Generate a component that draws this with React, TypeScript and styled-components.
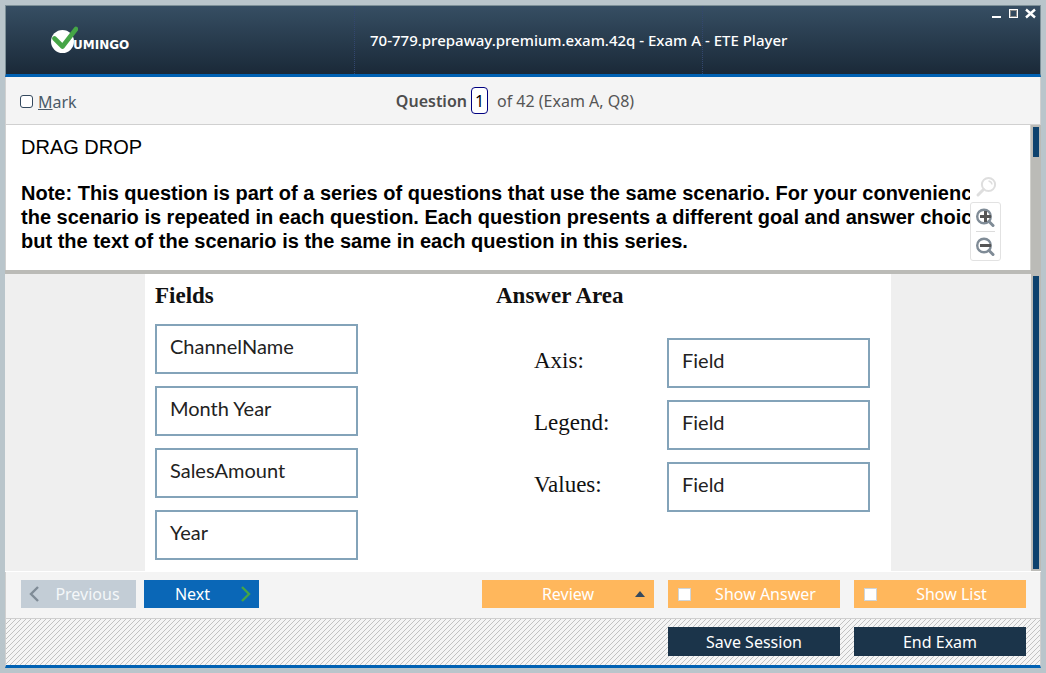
import React, { useState } from "react";
import styled, { createGlobalStyle } from "styled-components";

const ui = '"Noto Sans", "Open Sans", sans-serif';

const GlobalStyle = createGlobalStyle`
  *, *::before, *::after { box-sizing: border-box; }
  body { margin: 0; background: #b9c5cb; font-family: ${ui}; font-size: 16px; }
  button, input { font: inherit; margin: 0; }
`;

const Page = styled.div`
  min-height: 100vh;
  padding: 5px;
  display: flex;
`;

const Window = styled.main`
  flex: 1;
  min-width: 0;
  display: flex;
  flex-direction: column;
  background: #f4f4f4;
`;

const TitleBar = styled.header`
  display: grid;
  grid-template-columns: 349fr 348fr 337fr;
  height: 72px;
  border: 1px solid #7d9098;
  border-bottom: 3px solid #0061b3;
  background: linear-gradient(#364e63, #1a2938);
  color: #fff;
`;

const TitleCell = styled.div<{ $divided?: boolean }>`
  display: flex;
  align-items: center;
  min-width: 0;
  border-right: ${(p) => (p.$divided ? "1px dotted #33476f" : "0")};
`;

const Brand = styled.div`
  display: flex;
  padding-left: 44px;
  align-items: center;
`;

const BrandName = styled.span`
  font: bold 12px/12px "DejaVu Sans", sans-serif;
  margin: 10px 0 0 -5px;
`;

const Title = styled.h1`
  margin: 0;
  padding-left: 15px;
  font-size: 15px;
  font-weight: 500;
  line-height: 24px;
  white-space: nowrap;
`;

const WindowControls = styled.div`
  display: flex;
  gap: 4px;
  align-self: flex-start;
  margin-left: auto;
  padding: 2px 3px 0 0;
`;

const ControlButton = styled.button`
  display: flex;
  padding: 0;
  border: 0;
  background: none;
  color: #fff;
`;

const Toolbar = styled.div`
  display: grid;
  grid-template-columns: 1fr auto 1fr;
  align-items: center;
  height: 48px;
  padding: 0 14px;
  border: 1px solid #d0d0d0;
  border-top: 0;
  color: #555;
`;

const MarkLabel = styled.label`
  display: flex;
  align-items: center;
  gap: 5px;
  padding-top: 2px;
  color: #4a5a68;
  line-height: 24px;
`;

const MarkBox = styled.input`
  appearance: none;
  width: 13px;
  height: 13px;
  border: 1px solid #34495e;
  border-radius: 3px;
  background: #fff;
  &:checked { background: #34495e; }
`;

const Position = styled.div`
  display: flex;
  align-items: center;
  padding-right: 16px;
  line-height: 24px;
`;

const PositionLabel = styled.label`
  font-weight: 600;
  color: #4d4d4d;
`;

const PositionInput = styled.input`
  width: 17px;
  height: 27px;
  margin: 0 9px 0 4px;
  padding: 0;
  border: 1px solid #000080;
  border-radius: 4px;
  background: #fff;
  color: #000;
  text-align: center;
`;

const QuestionPane = styled.section`
  display: flex;
  height: 149px;
  border-bottom: 4px solid #bbbbb7;
  background: #fff;
`;

const QuestionText = styled.div`
  flex: 1;
  min-width: 0;
  overflow: hidden;
  padding: 10px 0 0 15px;
  border-left: 1px solid #d0d0d0;
  font: 20px/24px "Liberation Sans", Arial, sans-serif;
  color: #000;
  white-space: nowrap;
`;

const Heading = styled.p`
  margin: 0 0 22px;
`;

const Note = styled.p`
  margin: 0;
  font-weight: bold;
`;

const ZoomTools = styled.div`
  display: flex;
  flex-direction: column;
  align-items: center;
  width: 61px;
  padding: 51px 29px 0 0;
  border-right: 1px solid #d0d0cc;
`;

const ZoomGroup = styled.div`
  display: flex;
  flex-direction: column;
  align-items: center;
  width: 31px;
  margin-top: 4px;
  border: 1px solid #e2e2e2;
  border-radius: 3px;
`;

const ZoomButton = styled.button`
  display: flex;
  align-items: center;
  justify-content: center;
  width: 19px;
  height: 28px;
  padding: 0;
  border: 0;
  background: none;
  & + & { border-top: 1px solid #dcdcdc; height: 29px; }
`;

const ResetButton = styled(ZoomButton)`
  width: 22px;
  height: 22px;
`;

const ScrollTrack = styled.div`
  width: 10px;
  padding: 2px;
  background: #bbbbb7;
`;

const ScrollThumb = styled.div<{ $size: string }>`
  height: ${(p) => p.$size};
  background: #0d426e;
`;

const AnswerPane = styled.section`
  flex: 1;
  display: flex;
  background: #efefef;
  border-bottom: 1px solid #fff;
`;

const AnswerScroll = styled.div`
  flex: 1;
  min-width: 0;
  display: flex;
  justify-content: center;
`;

const Exhibit = styled.div`
  display: flex;
  gap: 138px;
  width: 746px;
  padding: 10px 10px 11px;
  background: #fff;
  color: #111;
`;

const ColumnTitle = styled.h2<{ $gap: number }>`
  margin: 0 0 ${(p) => p.$gap}px;
  font: bold 23px/24px "Liberation Serif", "Times New Roman", serif;
`;

const Stack = styled.div`
  display: flex;
  flex-direction: column;
  gap: 12px;
`;

const AnswerRow = styled.div`
  display: flex;
  align-items: center;
  padding-left: 38px;
`;

const AnswerLabel = styled.span`
  width: 133px;
  padding-bottom: 4px;
  font: 23px/28px "Liberation Serif", "Times New Roman", serif;
`;

const FieldBox = styled.button`
  width: 203px;
  height: 50px;
  padding: 0 13px 7px;
  border: 2px solid #83a3b9;
  background: #fff;
  color: #222;
  font: 20px/24px Lato, Calibri, sans-serif;
  text-align: left;
`;

const NavBar = styled.div`
  display: flex;
  align-items: center;
  gap: 14px;
  height: 46px;
  padding: 0 14px 2px 15px;
  border: solid #d0d0d0;
  border-width: 0 1px;
`;

const StepGroup = styled.div`
  display: flex;
  gap: 8px;
  margin-right: auto;
`;

const StepButton = styled.button<{ $tone: "muted" | "primary" }>`
  display: flex;
  align-items: center;
  gap: 8px;
  width: 115px;
  height: 28px;
  padding: 0 8px;
  border: 0;
  background: ${(p) => (p.$tone === "muted" ? "#c3cdd6" : "#0a67b7")};
  color: ${(p) => (p.$tone === "muted" ? "#f4f7f9" : "#fff")};
  line-height: 24px;
`;

const StepText = styled.span`
  flex: 1;
  text-align: center;
`;

const OptionButton = styled.button`
  display: grid;
  grid-template-columns: 13px 1fr 14px;
  align-items: center;
  width: 172px;
  height: 28px;
  padding: 0 9px 0 10px;
  border: 0;
  background: #ffb75c;
  color: #fff;
  line-height: 24px;
`;

const OptionToggle = styled(OptionButton).attrs({ as: "label" })`
  grid-template-columns: 13px 1fr;
  padding: 0 0 0 10px;
  text-align: center;
`;

const OptionText = styled.span`
  grid-column: 2;
`;

const OptionArrow = styled.svg`
  justify-self: end;
`;

const OptionBox = styled.input`
  appearance: none;
  width: 13px;
  height: 13px;
  border: 1px solid #cfd4d8;
  background: #fff;
  &:checked { background: #34495e; }
`;

const SessionBar = styled.footer`
  display: flex;
  justify-content: flex-end;
  gap: 14px;
  height: 50px;
  padding: 8px 14px 0;
  border: 1px solid #cfcfcf;
  border-bottom: 3px solid #0061b3;
  background: linear-gradient(135deg, transparent 45%, #c2c2c2 45%, #c2c2c2 55%, transparent 55%) 0 0 / 5px 5px #f5f5f5;
`;

const SessionButton = styled.button`
  width: 172px;
  height: 29px;
  padding: 0;
  border: 0;
  background: #1b344a;
  color: #fff;
  line-height: 24px;
`;

const Logo = () => (
  <svg width="28" height="28" viewBox="0 0 28 28" aria-hidden="true">
    <circle cx="12.5" cy="15.5" r="11.5" fill="#fff" />
    <path d="M4.5 12.5 L12.5 20.5 L26 3" fill="none" stroke="#45a546" strokeWidth="4.6" strokeLinecap="round" strokeLinejoin="round" />
  </svg>
);

const Lens = ({ sign }: { sign: "plus" | "minus" }) => (
  <svg width="19" height="22" viewBox="0 -2 19 22" aria-hidden="true">
    <circle cx="8" cy="8.5" r="6.8" fill="#fff" stroke="#7f8b96" strokeWidth="2.4" />
    <path d="M13 13.5 L17 17.5" stroke="#7f8b96" strokeWidth="3" strokeLinecap="round" />
    <path d={sign === "plus" ? "M4 8.5 H15 M9.5 3 V14" : "M4 8.5 H15"} stroke="#555" strokeWidth="3" />
  </svg>
);

const fields = ["ChannelName", "Month Year", "SalesAmount", "Year"];
const targets = ["Axis:", "Legend:", "Values:"];

export default function App() {
  const [position, setPosition] = useState("1");
  return (
    <Page>
      <GlobalStyle />
      <Window>
        <TitleBar>
          <TitleCell $divided>
            <Brand>
              <Logo />
              <BrandName>UMINGO</BrandName>
            </Brand>
          </TitleCell>
          <TitleCell $divided>
            <Title>70-779.prepaway.premium.exam.42q - Exam A - ETE Player</Title>
          </TitleCell>
          <TitleCell>
            <WindowControls>
              <ControlButton aria-label="Minimize">
                <svg width="13" height="13" viewBox="0 0 13 13"><rect x="2" y="8" width="9" height="2" fill="#fff" /></svg>
              </ControlButton>
              <ControlButton aria-label="Maximize">
                <svg width="13" height="13" viewBox="0 0 13 13">
                  <rect x="2.5" y="1.5" width="8" height="8" fill="none" stroke="#fff" />
                  <rect x="3.5" y="2.5" width="6" height="6" fill="none" stroke="#8a8a88" />
                </svg>
              </ControlButton>
              <ControlButton aria-label="Close">
                <svg width="13" height="13" viewBox="0 0 13 13"><path d="M2 1.5 L11 9.5 M11 1.5 L2 9.5" stroke="#fff" strokeWidth="2.4" /></svg>
              </ControlButton>
            </WindowControls>
          </TitleCell>
        </TitleBar>

        <Toolbar>
          <MarkLabel>
            <MarkBox type="checkbox" />
            <span><u>M</u>ark</span>
          </MarkLabel>
          <Position>
            <PositionLabel htmlFor="position">Question</PositionLabel>
            <PositionInput id="position" value={position} onChange={(e) => setPosition(e.target.value)} />
            <span>of 42 (Exam A, Q8)</span>
          </Position>
        </Toolbar>

        <QuestionPane>
          <QuestionText>
            <Heading>DRAG DROP</Heading>
            <Note>
              Note: This question is part of a series of questions that use the same scenario. For your convenience,
              <br />
              the scenario is repeated in each question. Each question presents a different goal and answer choices,
              <br />
              but the text of the scenario is the same in each question in this series.
            </Note>
          </QuestionText>
          <ZoomTools>
            <ResetButton aria-label="Reset zoom">
              <svg width="22" height="22" viewBox="0 0 22 22">
                <circle cx="13.5" cy="8.5" r="6.6" fill="none" stroke="#dedede" strokeWidth="2" />
                <path d="M13.5 5 A4 4 0 0 1 17 8.5" fill="none" stroke="#dedede" strokeWidth="1.4" />
                <path d="M8.5 13.5 L3 19" stroke="#dedede" strokeWidth="3" strokeLinecap="round" />
              </svg>
            </ResetButton>
            <ZoomGroup>
              <ZoomButton aria-label="Zoom in"><Lens sign="plus" /></ZoomButton>
              <ZoomButton aria-label="Zoom out"><Lens sign="minus" /></ZoomButton>
            </ZoomGroup>
          </ZoomTools>
          <ScrollTrack><ScrollThumb $size="30px" /></ScrollTrack>
        </QuestionPane>

        <AnswerPane>
          <AnswerScroll>
            <Exhibit>
              <div>
                <ColumnTitle $gap={16}>Fields</ColumnTitle>
                <Stack>
                  {fields.map((name) => <FieldBox key={name}>{name}</FieldBox>)}
                </Stack>
              </div>
              <div>
                <ColumnTitle $gap={30}>Answer Area</ColumnTitle>
                <Stack>
                  {targets.map((name) => (
                    <AnswerRow key={name}>
                      <AnswerLabel>{name}</AnswerLabel>
                      <FieldBox aria-label={name + " Field"}>Field</FieldBox>
                    </AnswerRow>
                  ))}
                </Stack>
              </div>
            </Exhibit>
          </AnswerScroll>
          <ScrollTrack><ScrollThumb $size="100%" /></ScrollTrack>
        </AnswerPane>

        <NavBar>
          <StepGroup>
            <StepButton $tone="muted">
              <svg width="10" height="16" viewBox="0 0 10 16"><path d="M9 1 L2 8 L9 15" fill="none" stroke="#7f8b96" strokeWidth="2.4" /></svg>
              <StepText>Previous</StepText>
            </StepButton>
            <StepButton $tone="primary">
              <StepText>Next</StepText>
              <svg width="10" height="16" viewBox="0 0 10 16"><path d="M1 1 L8 8 L1 15" fill="none" stroke="#45a546" strokeWidth="2.4" /></svg>
            </StepButton>
          </StepGroup>
          <OptionButton>
            <OptionText>Review</OptionText>
            <OptionArrow width="10" height="6" viewBox="0 0 10 6"><path d="M5 0 L10 6 H0 Z" fill="#34495e" /></OptionArrow>
          </OptionButton>
          <OptionToggle>
            <OptionBox type="checkbox" />
            <OptionText>Show Answer</OptionText>
          </OptionToggle>
          <OptionToggle>
            <OptionBox type="checkbox" />
            <OptionText>Show List</OptionText>
          </OptionToggle>
        </NavBar>

        <SessionBar>
          <SessionButton>Save Session</SessionButton>
          <SessionButton>End Exam</SessionButton>
        </SessionBar>
      </Window>
    </Page>
  );
}
